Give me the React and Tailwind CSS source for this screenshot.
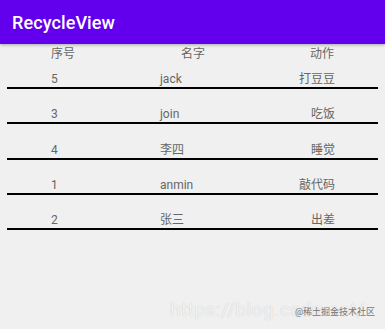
import React from 'react';

const rows = [
  { id: '5', name: 'jack', action: '打豆豆' },
  { id: '3', name: 'join', action: '吃饭' },
  { id: '4', name: '李四', action: '睡觉' },
  { id: '1', name: 'anmin', action: '敲代码' },
  { id: '2', name: '张三', action: '出差' },
];

const font = { fontFamily: 'Roboto, "Noto Sans CJK SC", sans-serif' };

export default function App() {
  return (
    <div className="relative w-[385px] h-[329px] bg-[#f0f0f0] overflow-hidden" style={font}>
      {/* Toolbar */}
      <div className="h-[44px] bg-[#6200ee] flex items-center px-3 shadow-[0_1px_3px_rgba(0,0,0,0.3)] relative z-10">
        <span className="text-white text-[18px] font-medium tracking-[0.1px]">RecycleView</span>
      </div>

      {/* Column headings */}
      <div className="flex h-[20px] mx-[7px] pl-[44px] text-[12px] leading-[20px] text-[#666]">
        <span className="w-[130px]">序号</span>
        <span className="w-[129px]">名字</span>
        <span>动作</span>
      </div>

      {/* List */}
      <div className="mx-[7px] mt-[7px] flex flex-col gap-[17.3px]">
        {rows.map((r) => (
          <div key={r.id} className="flex flex-col">
            <div className="flex h-[16px] pl-[44px] pr-[43px] text-[12px] leading-[16px] text-[#666]">
              <span className="w-[109px]">{r.id}</span>
              <span className="flex-1">{r.name}</span>
              <span>{r.action}</span>
            </div>
            <div className="h-[2px] bg-black" />
          </div>
        ))}
      </div>

      {/* Watermark overlay */}
      <div className="absolute left-[170px] right-[10px] bottom-[10px] h-[20px] whitespace-nowrap">
        <span className="text-[19px] leading-[20px] tracking-[0.5px] text-white/80 [text-shadow:0_0_1px_rgba(0,0,0,0.25)]">
          https://blog.csdn.net/
        </span>
        <span className="absolute right-0 bottom-[1px] text-[9px] leading-[11px] text-[#777]">@稀土掘金技术社区</span>
      </div>
    </div>
  );
}
